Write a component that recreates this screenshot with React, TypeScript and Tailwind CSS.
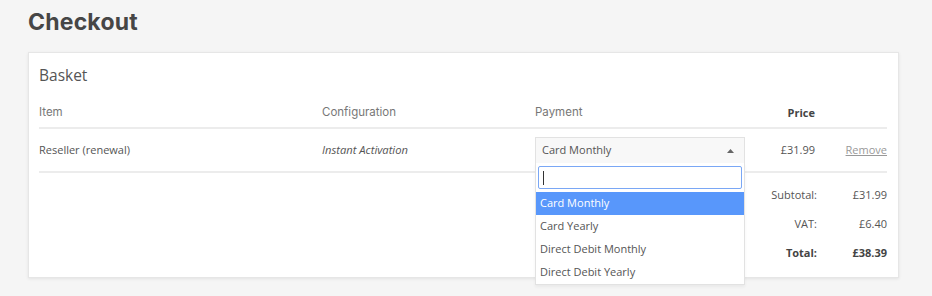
import React from "react";

const body = { fontFamily: '"Open Sans", "Liberation Sans", sans-serif' };
const head = { fontFamily: 'Inter, "Liberation Sans", sans-serif' };

export default function App() {
  return (
    <div className="min-h-[296px] w-[932px] bg-[#f5f5f5] px-[28px] pt-[7px]" style={body}>
      <h1 className="text-[23px] font-bold leading-[30px] text-[#464646] tracking-[0.2px]" style={head}>
        Checkout
      </h1>
      <div className="mt-[15px] w-[871px] bg-white border border-[#e6e6e6] shadow-[0_1px_3px_rgba(0,0,0,0.08)] pl-[10px] pr-[11px] pt-[11px] pb-[9px]">
        <div className="text-[15.5px] leading-[22px] text-[#555]">Basket</div>
        <div className="mt-[10px] grid grid-cols-[283px_213px_210px_70px_72px] items-center h-[33px] border-b-2 border-[#ececec] pt-[3px] text-[11.5px] text-[#777]">
          <div style={head}>Item</div>
          <div style={head}>Configuration</div>
          <div style={head}>Payment</div>
          <div className="text-right font-bold text-[11px] text-[#444]" style={body}>Price</div>
          <div />
        </div>
        <div className="grid grid-cols-[283px_213px_210px_70px_72px] items-center h-[44px] border-b-2 border-[#ececec] text-[11px] text-[#555]">
          <div>Reseller (renewal)</div>
          <div className="italic text-[11.2px]">Instant Activation</div>
          <div className="relative">
            <div className="h-[26px] flex items-center justify-between px-[6px] border border-[#e2e2e2] border-b-0 bg-[#f8f8f8] text-[#555]">
              <span>Card Monthly</span>
              <svg width="7" height="4" viewBox="0 0 7 4" className="mr-[4px]">
                <path d="M0 4 L3.5 0 L7 4 Z" fill="#666" />
              </svg>
            </div>
            <div className="absolute left-0 top-full z-10 w-full bg-white border border-[#e2e2e2] border-t-0 shadow-[0_2px_3px_rgba(0,0,0,0.05)]">
              <div className="px-[2px] pt-[3px] pb-[3px]">
                <div className="h-[23px] border border-[#7aa7f5] rounded-[2px] flex items-center pl-[4px]">
                  <span className="block w-[1px] h-[14px] bg-[#333]" />
                </div>
              </div>
              <div className="h-[23px] flex items-center pl-[4px] bg-[#5897fb] text-white">Card Monthly</div>
              <div className="h-[23px] flex items-center pl-[4px]">Card Yearly</div>
              <div className="h-[23px] flex items-center pl-[4px]">Direct Debit Monthly</div>
              <div className="h-[23px] flex items-center pl-[4px]">Direct Debit Yearly</div>
            </div>
          </div>
          <div className="text-right">£31.99</div>
          <div className="text-right text-[#999] underline">Remove</div>
        </div>
        <div className="pt-[8px] text-[11px] text-[#555]">
          <div className="grid grid-cols-[283px_213px_210px_72px_70px] items-center h-[29px]">
            <div /><div /><div />
            <div className="text-right">Subtotal:</div>
            <div className="text-right">£31.99</div>
          </div>
          <div className="grid grid-cols-[283px_213px_210px_72px_70px] items-center h-[29px]">
            <div /><div /><div />
            <div className="text-right">VAT:</div>
            <div className="text-right">£6.40</div>
          </div>
          <div className="grid grid-cols-[283px_213px_210px_72px_70px] items-center h-[29px] font-bold text-[#444]">
            <div /><div /><div />
            <div className="text-right">Total:</div>
            <div className="text-right">£38.39</div>
          </div>
        </div>
      </div>
    </div>
  );
}
